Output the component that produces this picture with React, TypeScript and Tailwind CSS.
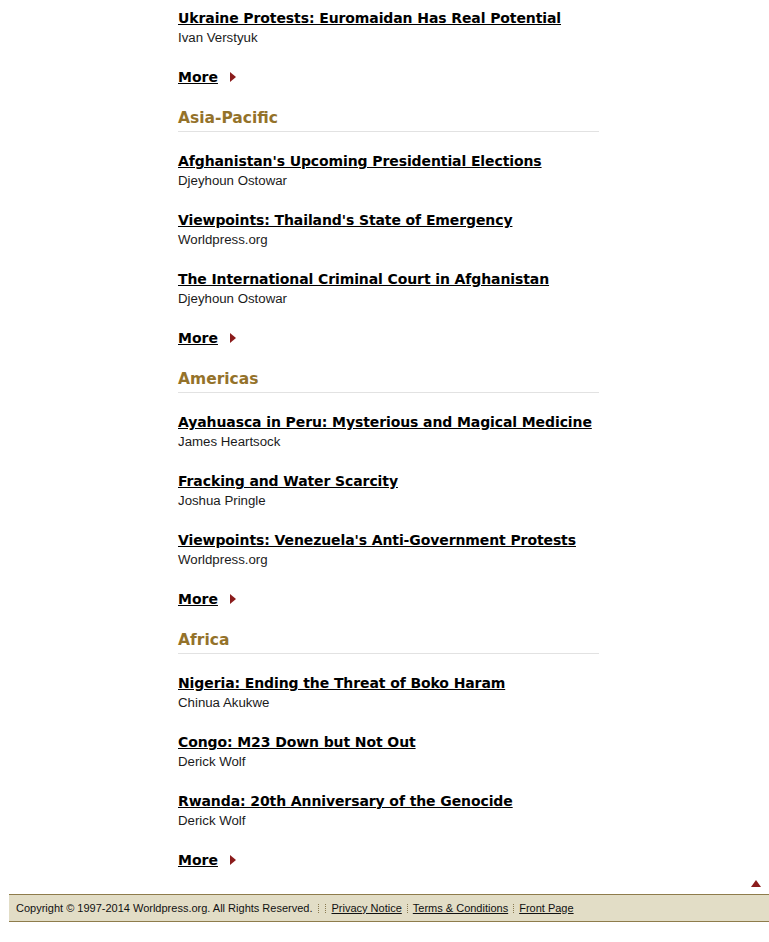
import React from "react";

type Item = { title: string; author: string };
type Section = { name?: string; items: Item[] };

const sections: Section[] = [
  { items: [{ title: "Ukraine Protests: Euromaidan Has Real Potential", author: "Ivan Verstyuk" }] },
  {
    name: "Asia-Pacific",
    items: [
      { title: "Afghanistan's Upcoming Presidential Elections", author: "Djeyhoun Ostowar" },
      { title: "Viewpoints: Thailand's State of Emergency", author: "Worldpress.org" },
      { title: "The International Criminal Court in Afghanistan", author: "Djeyhoun Ostowar" },
    ],
  },
  {
    name: "Americas",
    items: [
      { title: "Ayahuasca in Peru: Mysterious and Magical Medicine", author: "James Heartsock" },
      { title: "Fracking and Water Scarcity", author: "Joshua Pringle" },
      { title: "Viewpoints: Venezuela's Anti-Government Protests", author: "Worldpress.org" },
    ],
  },
  {
    name: "Africa",
    items: [
      { title: "Nigeria: Ending the Threat of Boko Haram", author: "Chinua Akukwe" },
      { title: "Congo: M23 Down but Not Out", author: "Derick Wolf" },
      { title: "Rwanda: 20th Anniversary of the Genocide", author: "Derick Wolf" },
    ],
  },
];

const titleFont = { fontFamily: '"DejaVu Sans", Verdana, sans-serif' };
const bodyFont = { fontFamily: '"Liberation Sans", Arial, sans-serif' };

function More() {
  return (
    <div className="flex items-center h-[20px] mb-[20px]">
      <a href="#" className="text-[14px] font-bold text-black underline leading-[20px]" style={titleFont}>
        More
      </a>
      <svg width="6" height="10" viewBox="0 0 6 10" className="ml-[12px]">
        <polygon points="0,0 6,5 0,10" fill="#8b1c1c" />
      </svg>
    </div>
  );
}

function Sep({ className = "mx-[5px]" }: { className?: string }) {
  return <span className={"inline-block h-[9px] border-l border-dotted border-[#8a7a50] align-middle " + className} />;
}

export default function App() {
  return (
    <div className="bg-white w-[769px] min-h-[942px]" style={bodyFont}>
      <div className="pl-[178px] pt-[8px] w-[599px]">
        {sections.map((s, i) => (
          <div key={i}>
            {s.name && (
              <div className="border-b border-[#e2e2e2] mb-[19px]">
                <h2 className="text-[15.5px] font-bold text-[#94722a] leading-[22px] pb-[2px]" style={titleFont}>
                  {s.name}
                </h2>
              </div>
            )}
            {s.items.map((it, j) => (
              <div key={j} className="mb-[19px]">
                <a href="#" className="block text-[14px] font-bold text-black underline leading-[20px] whitespace-nowrap tracking-[-0.1px]" style={titleFont}>
                  {it.title}
                </a>
                <div className="text-[13.25px] text-[#1a1a1a] leading-[20px]">{it.author}</div>
              </div>
            ))}
            <More />
          </div>
        ))}
      </div>
      <div className="flex justify-end pr-[8px] mt-[-12px] h-[10px] items-center">
        <svg width="10" height="7" viewBox="0 0 10 7">
          <polygon points="5,0 10,7 0,7" fill="#8b1c1c" />
        </svg>
      </div>
      <div className="ml-[9px] mt-[6px] h-[28px] bg-[#e2ddc6] border-y border-[#8e7c4c] flex items-center pl-[7px] text-[11px] text-[#111]">
        <span>Copyright © 1997-2014 Worldpress.org. All Rights Reserved.</span>
        <Sep className="ml-[5px] mr-[4px]" />
        <Sep className="ml-[2px] mr-[6px]" />
        <a href="#" className="underline text-[#111]">Privacy Notice</a>
        <Sep />
        <a href="#" className="underline text-[#111]">Terms &amp; Conditions</a>
        <Sep />
        <a href="#" className="underline text-[#111]">Front Page</a>
      </div>
    </div>
  );
}
